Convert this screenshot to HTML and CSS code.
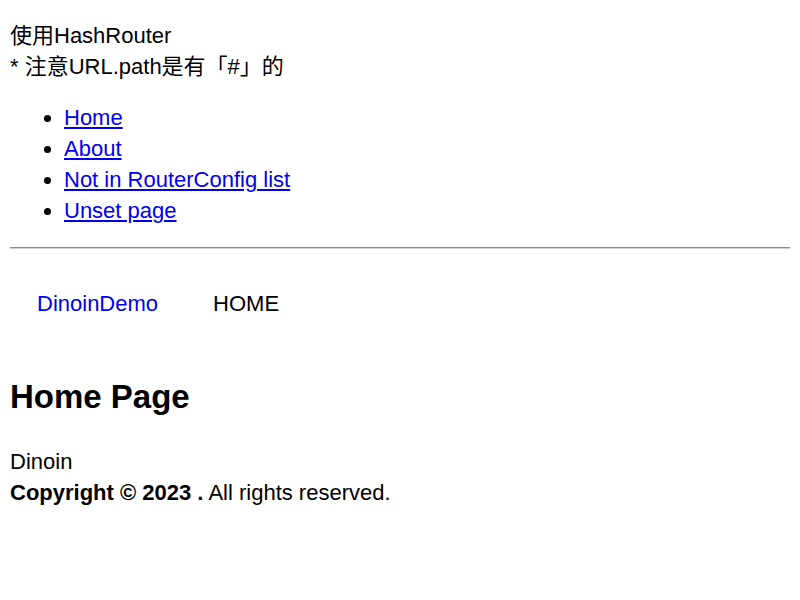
FILE: index.html
```html
<!DOCTYPE html>
<html lang="zh">
<head>
<meta charset="utf-8">
<title>HashRouter Demo</title>
<link rel="stylesheet" href="styles.css">
</head>
<body>
<p class="intro">使用HashRouter<br>* 注意URL.path是有「#」的</p>
<ul class="links">
  <li><a href="#/">Home</a></li>
  <li><a href="#/about">About</a></li>
  <li><a href="#/not-in-list">Not in RouterConfig list</a></li>
  <li><a href="#/unset">Unset page</a></li>
</ul>
<hr class="rule">
<nav class="nav">
  <a class="brand" href="#/">DinoinDemo</a>
  <span class="nav-item">HOME</span>
</nav>
<main class="page">
  <h2 class="page-title">Home Page</h2>
</main>
<footer class="footer">
  <div>Dinoin</div>
  <div><strong>Copyright © 2023 .</strong> All rights reserved.</div>
</footer>
</body>
</html>
```
FILE: styles.css
```css
html, body {
  background: #fff;
}
body {
  margin: 10px;
  font-family: "Liberation Sans", Arial, "Noto Sans CJK SC", sans-serif;
  font-size: 22px;
  line-height: 31px;
  color: #000;
}
.intro {
  margin: 10px 0 20px;
}
.links {
  margin: 20px 0;
  padding-left: 54px;
}
.links a {
  color: #0000ee;
}
.rule {
  margin: 21px -3px 10px 0;
  border: 0;
  border-top: 1px solid #8a8a8a;
  border-bottom: 1px solid #d0d0d0;
  height: 0;
}
.nav {
  display: flex;
  gap: 55px;
  padding: 29px 27px;
}
.brand {
  color: #0000ee;
  text-decoration: none;
}
.page-title {
  margin: 28px 0 28px;
  font-size: 33px;
  line-height: 42px;
  font-weight: bold;
}
.footer {
  margin: 0;
}
```
